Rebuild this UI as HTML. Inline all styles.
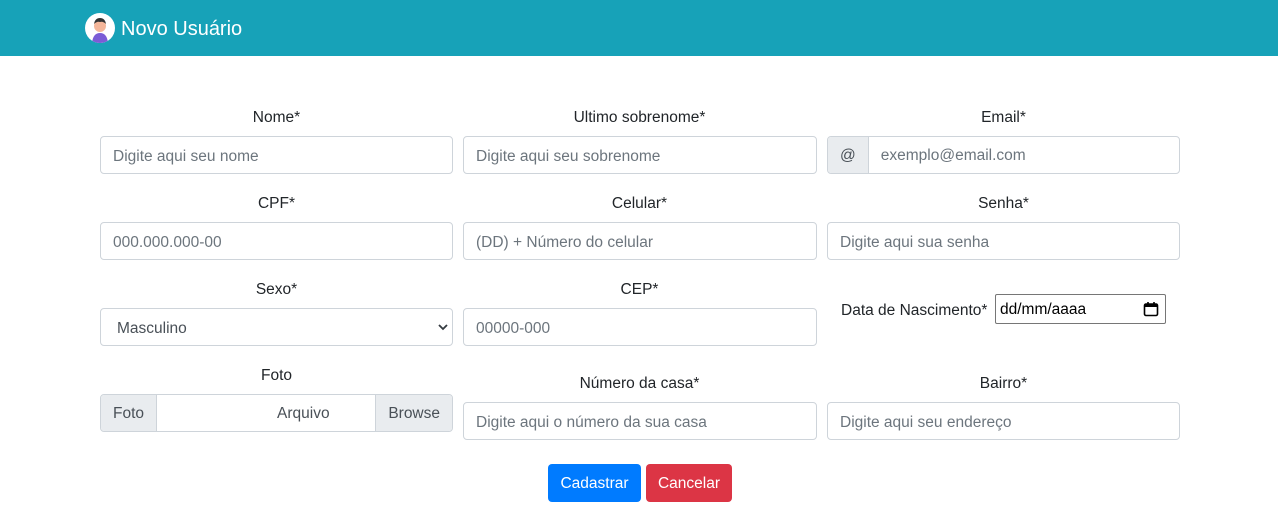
<!DOCTYPE html>
<html><head><meta charset="utf-8"><style>
*{box-sizing:border-box;margin:0;padding:0}
body{width:1278px;height:518px;background:#fff;font-family:"Liberation Sans",sans-serif;color:#212529;position:relative;overflow:hidden}
.hdr{position:absolute;left:0;top:0;width:1278px;height:56px;background:#17a2b8}
.hdr .t{position:absolute;left:121px;top:18px;color:#fff;font-size:20px}
.av{position:absolute;left:85px;top:13px;width:30px;height:30px;border-radius:50%;background:#fff;overflow:hidden}
.lbl{position:absolute;font-size:15.5px;text-align:center;width:353px}
.in{position:absolute;height:38px;border:1px solid #ced4da;border-radius:4px;font-size:15.5px;color:#6c757d;padding:2px 12px 0;line-height:36px;background:#fff}
.grp{position:absolute;height:38px;width:353px;border:1px solid #ced4da;border-radius:4px;font-size:15.5px;line-height:38px;display:flex;overflow:hidden}
.add{background:#e9ecef;color:#495057;padding:0 12px}
.btn{position:absolute;top:464px;height:38px;border-radius:4px;color:#fff;font-size:15.5px;line-height:40px;text-align:center}
</style></head><body>
<div class="hdr"><div class="av"><svg width="30" height="30"><circle cx="15" cy="13" r="6" fill="#f4b69a"/><path d="M9 11 Q10 5 15 5 Q20 5 21 11 Q18 8 15 9 Q12 8 9 11Z" fill="#333"/><path d="M7 30 Q8 20 15 20 Q22 20 23 30Z" fill="#7b5cd6"/></svg></div><div class="t">Novo Usuário</div></div>

<div class="lbl" style="left:100px;top:109px">Nome*</div>
<div class="lbl" style="left:463px;top:109px">Ultimo sobrenome*</div>
<div class="lbl" style="left:827px;top:109px">Email*</div>
<div class="in" style="left:100px;top:136px;width:353px">Digite aqui seu nome</div>
<div class="in" style="left:463px;top:136px;width:354px">Digite aqui seu sobrenome</div>
<div class="grp" style="left:827px;top:136px"><span class="add" style="border-right:1px solid #ced4da">@</span><span style="color:#6c757d;padding-left:12px">exemplo@email.com</span></div>

<div class="lbl" style="left:100px;top:195px">CPF*</div>
<div class="lbl" style="left:463px;top:195px">Celular*</div>
<div class="lbl" style="left:827px;top:195px">Senha*</div>
<div class="in" style="left:100px;top:222px;width:353px">000.000.000-00</div>
<div class="in" style="left:463px;top:222px;width:354px">(DD) + Número do celular</div>
<div class="in" style="left:827px;top:222px;width:353px">Digite aqui sua senha</div>

<div class="lbl" style="left:100px;top:281px">Sexo*</div>
<div class="lbl" style="left:463px;top:281px">CEP*</div>
<div class="in" style="left:100px;top:308px;width:353px;color:#495057;padding-left:16px">Masculino<svg style="position:absolute;right:4px;top:14px" width="10" height="8"><path d="M1 2 L5 6 L9 2" stroke="#343a40" stroke-width="1.8" fill="none"/></svg></div>
<div class="in" style="left:463px;top:308px;width:354px">00000-000</div>
<div style="position:absolute;left:841px;top:302px;font-size:15.5px">Data de Nascimento*</div>
<div style="position:absolute;left:995px;top:294px;width:171px;height:30px;border:1px solid #767676;border-radius:2px;font-size:15.5px;line-height:30px;padding-left:4px;color:#000">dd/mm/aaaa<svg style="position:absolute;right:6px;top:6px" width="16" height="16"><rect x="1.5" y="3" width="13" height="11.5" rx="1.5" fill="none" stroke="#000" stroke-width="1.6"/><rect x="1.5" y="3" width="13" height="3" fill="#000"/><path d="M5 1v3M11 1v3" stroke="#000" stroke-width="1.6"/></svg></div>

<div class="lbl" style="left:100px;top:367px">Foto</div>
<div class="lbl" style="left:463px;top:375px">Número da casa*</div>
<div class="lbl" style="left:827px;top:375px">Bairro*</div>
<div class="grp" style="left:100px;top:394px"><span class="add" style="border-right:1px solid #ced4da">Foto</span><span style="flex:1;padding-left:120px;color:#495057">Arquivo</span><span class="add" style="border-left:1px solid #ced4da">Browse</span></div>
<div class="in" style="left:463px;top:402px;width:354px">Digite aqui o número da sua casa</div>
<div class="in" style="left:827px;top:402px;width:353px">Digite aqui seu endereço</div>

<div class="btn" style="left:548px;width:93px;background:#007bff">Cadastrar</div>
<div class="btn" style="left:646px;width:86px;background:#dc3545">Cancelar</div>
</body></html>
